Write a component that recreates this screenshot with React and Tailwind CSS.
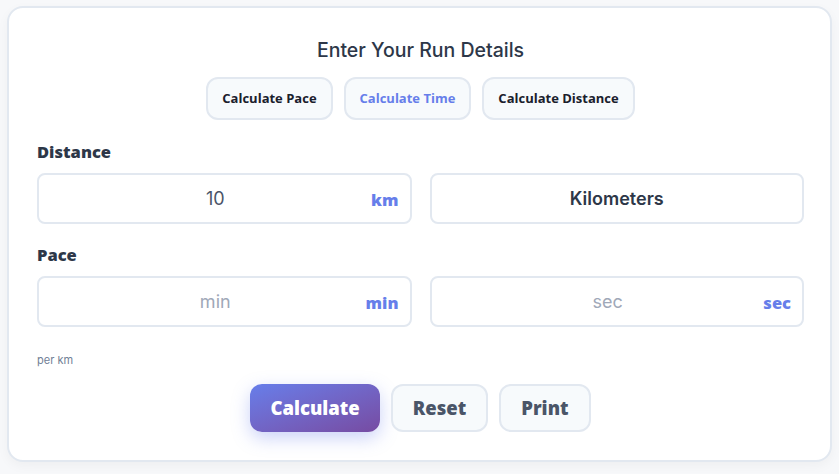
import React, { useState } from 'react';

const bold = { fontFamily: '"Open Sans", "Noto Sans", sans-serif' };

const UnitInput = ({ value, placeholder, unit }) => (
    <div className="relative flex-1">
        <input
            defaultValue={value}
            placeholder={placeholder}
            className="w-full h-[51px] rounded-lg border-2 border-[#e2e8f0] bg-white pl-[14px] pr-[32px] text-center text-lg text-[#4a5568] placeholder:text-[#a0a8b8] outline-none font-['Inter',sans-serif]"
        />
        <span style={bold} className="absolute right-[13px] top-1/2 -translate-y-[45%] text-[16.5px] font-extrabold text-[#667eea]">{unit}</span>
    </div>
);

const App = () => {
    const [mode, setMode] = useState('time');

    const tabs = [
        { id: 'pace', label: 'Calculate Pace' },
        { id: 'time', label: 'Calculate Time' },
        { id: 'distance', label: 'Calculate Distance' },
    ];

    return (
        <div className="min-h-[474px] bg-[#f7f8fa] px-[7px] pt-[6px] font-['Inter',sans-serif]">
            <div className="rounded-2xl border-2 border-[#e2e8f0] bg-white pl-[28px] pr-[26px] pt-[28px] pb-[28px] shadow-[0_4px_12px_rgba(0,0,0,0.04)]">
                <h2 className="text-center text-[19.5px] font-medium text-[#2d3748] leading-[28px]">Enter Your Run Details</h2>

                <div className="mt-[13px] flex justify-center gap-[11px]">
                    {tabs.map(t => (
                        <button
                            key={t.id}
                            onClick={() => setMode(t.id)}
                            style={bold}
                            className={`h-[43px] rounded-xl border-2 border-[#e2e8f0] bg-[#f7fafc] px-[14px] text-[13px] font-bold ${mode === t.id ? 'text-[#667eea]' : 'text-[#1a202c]'}`}
                        >
                            {t.label}
                        </button>
                    ))}
                </div>

                <label style={bold} className="mt-[21px] block text-[16.5px] font-extrabold text-[#2d3748] leading-[22px]">Distance</label>
                <div className="mt-[10px] flex gap-[18px]">
                    <UnitInput value="10" unit="km" />
                    <div className="flex-1">
                        <div className="flex h-[51px] items-center justify-center rounded-lg border-2 border-[#e2e8f0] bg-white text-lg font-semibold text-[#2d3748]">Kilometers</div>
                    </div>
                </div>

                <label style={bold} className="mt-[20px] block text-[16.5px] font-extrabold text-[#2d3748] leading-[22px]">Pace</label>
                <div className="mt-[10px] flex gap-[18px]">
                    <UnitInput placeholder="min" unit="min" />
                    <UnitInput placeholder="sec" unit="sec" />
                </div>

                <p className="mt-[25px] text-[11px] text-[#718096]">per km</p>

                <div className="mt-[15px] flex justify-center gap-[11px]">
                    <button style={bold} className="h-[48px] rounded-xl bg-gradient-to-br from-[#667eea] to-[#764ba2] px-[20px] text-[18.5px] font-extrabold text-white shadow-[0_6px_18px_rgba(102,126,234,0.35)]">Calculate</button>
                    <button style={bold} className="h-[48px] rounded-xl border-2 border-[#e2e8f0] bg-[#f7fafc] px-[20px] text-[18.5px] font-extrabold text-[#4a5568]">Reset</button>
                    <button style={bold} className="h-[48px] rounded-xl border-2 border-[#e2e8f0] bg-[#f7fafc] px-[20px] text-[18.5px] font-extrabold text-[#4a5568]">Print</button>
                </div>
            </div>
        </div>
    );
};

export default App;
